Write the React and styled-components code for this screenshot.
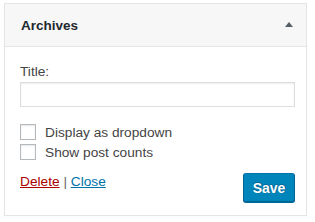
import React from "react";
import styled, { createGlobalStyle } from "styled-components";

const Global = createGlobalStyle`
  html, body { margin: 0; padding: 0; background: #fff; }
  body { font-family: "Liberation Sans", Arial, sans-serif; font-size: 13.7px; color: #444; }
  * { box-sizing: border-box; }
`;

const Widget = styled.div`
  margin: 3px 0 0 4px;
  width: 303px;
  border: 1px solid #e5e5e5;
  background: #fff;
  box-shadow: 0 1px 1px rgba(0,0,0,0.04);
`;

const Top = styled.div`
  height: 43px;
  background: #f7f7f7;
  border-bottom: 1px solid #e5e5e5;
  display: flex;
  align-items: center;
  justify-content: space-between;
  padding: 0 13px 0 16px;
`;

const Title = styled.h3`
  margin: 0;
  font-size: 13.5px;
  font-weight: 700;
  color: #23282d;
`;

const Arrow = styled.span`
  width: 0;
  height: 0;
  border-left: 4px solid transparent;
  border-right: 4px solid transparent;
  border-bottom: 5px solid #555d66;
  margin-top: -1px;
`;

const Body = styled.div`
  padding: 16px 11px 13px 15px;
`;

const Label = styled.label`
  display: block;
  line-height: 18px;
  margin-bottom: 1px;
`;

const Input = styled.input`
  display: block;
  width: 275px;
  height: 25px;
  border: 1px solid #ddd;
  box-shadow: inset 0 1px 2px rgba(0,0,0,0.07);
  margin: 0 0 17px;
  padding: 0 4px;
`;

const CheckRow = styled.label`
  display: flex;
  align-items: center;
  gap: 9px;
  height: 16px;
  margin-bottom: 4px;
`;

const Box = styled.span`
  width: 16px;
  height: 16px;
  border: 1px solid #b4b9be;
  background: #fff;
  box-shadow: inset 0 1px 2px rgba(0,0,0,0.1);
`;

const Footer = styled.div`
  display: flex;
  justify-content: space-between;
  align-items: flex-start;
  margin-top: 11px;
`;

const Links = styled.div`
  line-height: 18px;
  margin-top: 2px;
  color: #666;
`;

const Link = styled.a`
  color: ${p => (p.$danger ? "#a00" : "#0073aa")};
  text-decoration: underline;
`;

const Save = styled.button`
  width: 52px;
  height: 29px;
  margin-top: 2px;
  background: #0085ba;
  border: 1px solid;
  border-color: #0073aa #006799 #006799;
  border-radius: 3px;
  box-shadow: 0 1px 0 #006799;
  color: #fff;
  font-family: inherit;
  font-size: 14px;
  font-weight: 700;
  text-shadow: 0 -1px 1px #006799, 1px 0 1px #006799;
  padding: 0;
`;

export default function App() {
  return (
    <>
      <Global />
      <Widget>
        <Top>
          <Title>Archives</Title>
          <Arrow />
        </Top>
        <Body>
          <Label>Title:</Label>
          <Input type="text" />
          <CheckRow><Box />Display as dropdown</CheckRow>
          <CheckRow><Box />Show post counts</CheckRow>
          <Footer>
            <Links>
              <Link $danger href="#">Delete</Link> | <Link href="#">Close</Link>
            </Links>
            <Save>Save</Save>
          </Footer>
        </Body>
      </Widget>
    </>
  );
}
